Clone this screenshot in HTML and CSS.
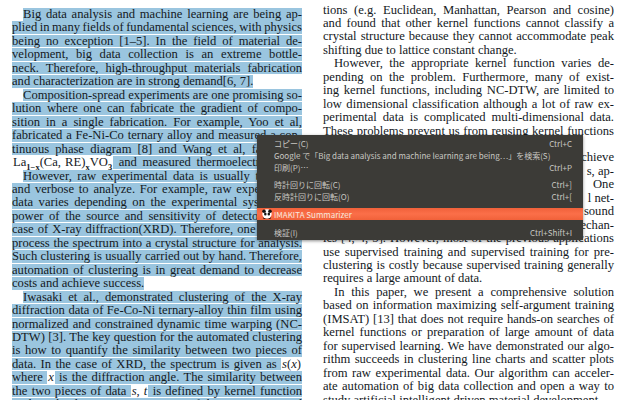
FILE: index.html
```html
<!DOCTYPE html>
<html lang="en">
<head>
<meta charset="utf-8">
<title>Paper</title>
<link rel="stylesheet" href="styles.css">
</head>
<body>
<main class="page">
  <section class="col col-left">
    <div class="para">
      <div class="line indent">Big data analysis and machine learning are being ap-</div>
      <div class="line">plied in many fields of fundamental sciences, with physics</div>
      <div class="line">being no exception [1–5]. In the field of material de-</div>
      <div class="line">velopment, big data collection is an extreme bottle-</div>
      <div class="line">neck. Therefore, high-throughput materials fabrication</div>
      <div class="line last">and characterization are in strong demand[6, 7].</div>
    </div>
    <div class="para">
      <div class="line indent">Composition-spread experiments are one promising so-</div>
      <div class="line">lution where one can fabricate the gradient of compo-</div>
      <div class="line">sition in a single fabrication. For example, Yoo et al,</div>
      <div class="line">fabricated a Fe-Ni-Co ternary alloy and measured a con-</div>
      <div class="line">tinuous phase diagram [8] and Wang et al, fabricated</div>
      <div class="line"><span class="m formula">La<sub>1−x</sub>(Ca, RE)<sub>x</sub>VO<sub>3</sub></span> and measured thermoelectric prop-</div>
    </div>
    <div class="para">
      <div class="line indent">However, raw experimental data is usually too large</div>
      <div class="line">and verbose to analyze. For example, raw experimental</div>
      <div class="line">data varies depending on the experimental system, the</div>
      <div class="line">power of the source and sensitivity of detector. In the</div>
      <div class="line">case of X-ray diffraction(XRD). Therefore, one needs to</div>
      <div class="line">process the spectrum into a crystal structure for analysis.</div>
      <div class="line">Such clustering is usually carried out by hand. Therefore,</div>
      <div class="line">automation of clustering is in great demand to decrease</div>
      <div class="line last">costs and achieve success.</div>
    </div>
    <div class="para">
      <div class="line indent">Iwasaki et al., demonstrated clustering of the X-ray</div>
      <div class="line">diffraction data of Fe-Co-Ni ternary-alloy thin film using</div>
      <div class="line">normalized and constrained dynamic time warping (NC-</div>
      <div class="line">DTW) [3]. The key question for the automated clustering</div>
      <div class="line">is how to quantify the similarity between two pieces of</div>
      <div class="line">data. In the case of XRD, the spectrum is given as <span class="m"><i>s</i>(<i>x</i>)</span></div>
      <div class="line">where <span class="m"><i>x</i></span> is the diffraction angle. The similarity between</div>
      <div class="line">the two pieces of data <span class="m formula"><i>s</i>, <i>t</i></span> is defined by kernel function</div>
      <div class="line">such as the dynamic time warping of the two spectra and</div>
    </div>
  </section>
  <section class="col col-right">
    <div class="para">
      <div class="line plain">tions (e.g. Euclidean, Manhattan, Pearson and cosine)</div>
      <div class="line plain">and found that other kernel functions cannot classify a</div>
      <div class="line plain">crystal structure because they cannot accommodate peak</div>
      <div class="line plain last">shifting due to lattice constant change.</div>
    </div>
    <div class="para">
      <div class="line plain indent">However, the appropriate kernel function varies de-</div>
      <div class="line plain">pending on the problem. Furthermore, many of exist-</div>
      <div class="line plain">ing kernel functions, including NC-DTW, are limited to</div>
      <div class="line plain">low dimensional classification although a lot of raw ex-</div>
      <div class="line plain">perimental data is complicated multi-dimensional data.</div>
      <div class="line plain">These problems prevent us from reusing kernel functions</div>
      <div class="line plain end">&nbsp;</div>
      <div class="line plain end">chieve</div>
      <div class="line plain end">s, ap-</div>
      <div class="line plain end">One</div>
      <div class="line plain end">l net-</div>
      <div class="line plain end">sound</div>
      <div class="line plain end">echan-</div>
      <div class="line plain">ics [4, 4, 5]. However, most of the previous applications</div>
      <div class="line plain">use supervised training and supervised training for pre-</div>
      <div class="line plain">clustering is costly because supervised training generally</div>
      <div class="line plain last">requires a large amount of data.</div>
    </div>
    <div class="para">
      <div class="line plain indent">In this paper, we present a comprehensive solution</div>
      <div class="line plain">based on information maximizing self-argument training</div>
      <div class="line plain">(IMSAT) [13] that does not require hands-on searches of</div>
      <div class="line plain">kernel functions or preparation of large amount of data</div>
      <div class="line plain">for supervised learning. We have demonstrated our algo-</div>
      <div class="line plain">rithm succeeds in clustering line charts and scatter plots</div>
      <div class="line plain">from raw experimental data. Our algorithm can acceler-</div>
      <div class="line plain">ate automation of big data collection and open a way to</div>
      <div class="line plain last">study artificial intelligent driven material development.</div>
    </div>
  </section>
</main>
<nav class="menu">
  <div class="item"><span>コピー(C)</span><span>Ctrl+C</span></div>
  <div class="item"><span>Google で「Big data analysis and machine learning are being…」を検索(S)</span></div>
  <div class="item"><span>印刷(P)…</span><span>Ctrl+P</span></div>
  <div class="item gap"><span>時計回りに回転(C)</span><span>Ctrl+]</span></div>
  <div class="item"><span>反時計回りに回転(O)</span><span>Ctrl+[</span></div>
  <div class="item gap active">
    <svg class="icon" viewBox="0 0 12 12" aria-hidden="true">
      <circle cx="6" cy="6" r="5.6" fill="#fff"/>
      <circle cx="2.4" cy="2.6" r="2.1" fill="#111"/>
      <circle cx="9.6" cy="2.6" r="2.1" fill="#111"/>
      <ellipse cx="4" cy="6" rx="1.5" ry="1.8" fill="#111"/>
      <ellipse cx="8.2" cy="6" rx="1.5" ry="1.8" fill="#111"/>
      <path d="M1 9.5c2 2.8 8 2.8 10 0l-1 2.4H2z" fill="#111"/>
    </svg>
    <span>IMAKITA Summarizer</span>
  </div>
  <div class="item gap-last"><span>検証(I)</span><span>Ctrl+Shift+I</span></div>
</nav>
</body>
</html>
```
FILE: styles.css
```css
html, body {
  margin: 0;
  height: 400px;
  overflow: hidden;
  background: #fff;
}
.page {
  display: flex;
  align-items: flex-start;
  gap: 21px;
  padding-left: 12px;
  font-family: "Liberation Serif", serif;
  font-size: 12.6px;
  word-spacing: -1.4px;
  color: #14191d;
}
.col-left { width: 290px; padding-top: 8px; }
.col-right { width: 291px; padding-top: 3.5px; }
.para { margin-bottom: 1px; }
.para:nth-child(n+2) { margin-top: 0.2px; }
.line {
  height: 12.6px;
  line-height: 12.6px;
  margin-bottom: 0.85px;
  background: #9ac5df;
  text-align: justify;
  text-align-last: justify;
}
.plain { background: transparent; }
.indent { margin-left: 11px; }
.last { text-align-last: left; width: fit-content; word-spacing: 0; }
.end { text-align-last: right; word-spacing: 0; }
.m { background: #fff; padding: 0 1px; }
.formula { display: inline-block; text-align-last: left; word-spacing: 1px; }
sub { font-size: 8.5px; line-height: 0; font-weight: bold; }
.menu {
  position: absolute;
  left: 257px;
  top: 135px;
  width: 326px;
  height: 105px;
  box-sizing: border-box;
  padding-top: 2px;
  background: #3c3b37;
  box-shadow: 0 1px 3px rgba(0,0,0,.45);
  font-family: "Noto Sans CJK JP", "Open Sans", sans-serif;
  font-size: 8px;
  color: #c8c7c2;
}
.item {
  display: flex;
  justify-content: space-between;
  align-items: center;
  height: 12px;
  padding: 0 11px 0 17px;
  white-space: nowrap;
}
.gap { margin-top: 5.5px; }
.gap-last { margin-top: 6px; }
.active {
  position: relative;
  height: 12px;
  justify-content: flex-start;
  background: linear-gradient(#f0613a, #fb6f49 50%, #f0613a);
  color: #f7e8df;
}
.icon {
  position: absolute;
  left: 5px;
  top: 1px;
  width: 10px;
  height: 10px;
}
```
